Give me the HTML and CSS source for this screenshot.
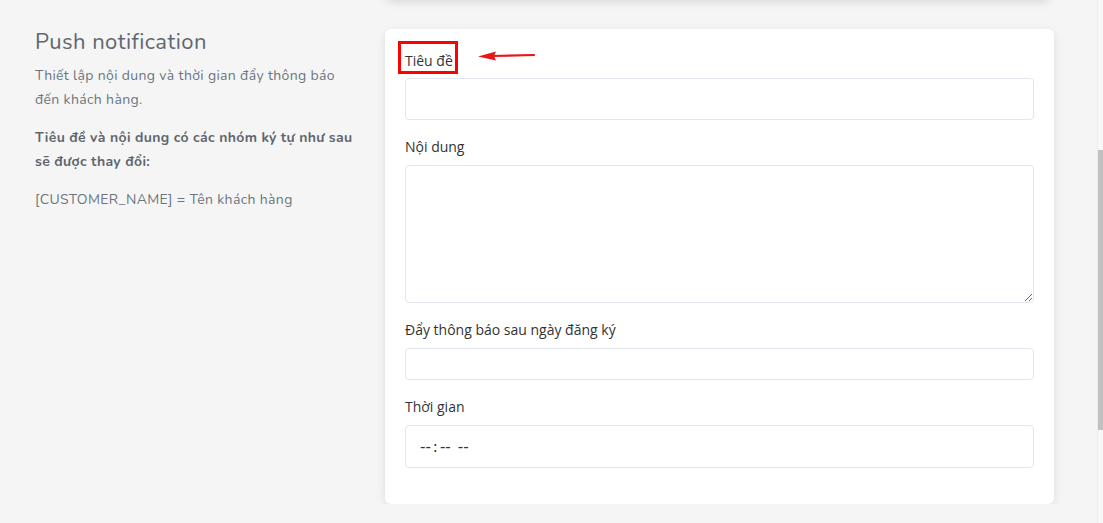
FILE: index.html
```html
<!DOCTYPE html>
<html lang="vi">
<head>
  <meta charset="UTF-8" />
  <meta name="viewport" content="width=device-width, initial-scale=1.0" />
  <title>Push notification</title>
  <link rel="stylesheet" href="styles.css">
</head>
<body>
  <div class="prev-card"></div>

  <div class="section">
    <div class="section-info">
      <h2>Push notification</h2>
      <p>Thiết lập nội dung và thời gian đẩy thông báo đến khách hàng.</p>
      <p class="strong">Tiêu đề và nội dung có các nhóm ký tự như sau sẽ được thay đổi:</p>
      <p>[CUSTOMER_NAME] = Tên khách hàng</p>
    </div>

    <div class="card">
      <div class="form-group">
        <div class="label-wrap">
          <label for="title">Tiêu đề</label>
          <span class="mark-box"></span>
          <svg class="mark-arrow" width="60" height="14" viewBox="0 0 60 14">
            <line x1="14" y1="7" x2="56" y2="6" stroke="#e8161b" stroke-width="2.2" stroke-linecap="round" />
            <path d="M0 7.5 L18 2.5 L16 7 L18 11.5 Z" fill="#e8161b" />
          </svg>
        </div>
        <input type="text" id="title" class="input input-lg" />
      </div>

      <div class="form-group">
        <label for="content">Nội dung</label>
        <textarea id="content" class="input textarea"></textarea>
      </div>

      <div class="form-group">
        <label for="days">Đẩy thông báo sau ngày đăng ký</label>
        <input type="text" id="days" class="input input-sm" />
      </div>

      <div class="form-group">
        <label for="time">Thời gian</label>
        <input type="time" id="time" class="input input-lg time" />
      </div>
    </div>
  </div>

  <div class="scrollbar"><div class="scrollbar-thumb"></div></div>
</body>
</html>
```

FILE: styles.css
```css
body {
  margin: 0;
  background-color: #f5f5f5;
  font-family: 'Nunito', 'Lato', sans-serif;
  color: #6c757d;
  overflow: hidden;
}

.prev-card {
  margin: -12px 0 0 385px;
  width: 665px;
  height: 12px;
  background-color: #fff;
  border-radius: 6px;
  box-shadow: 0 2px 10px rgba(0, 0, 0, 0.12);
}

.section {
  display: flex;
  margin-top: 29px;
}

.section-info {
  width: 320px;
  padding: 0 30px 0 35px;
  font-size: 14px;
  line-height: 24px;
  letter-spacing: 0.35px;
}

.section-info h2 {
  margin: 0 0 9px 0;
  font-size: 22px;
  font-weight: normal;
  line-height: 26px;
  letter-spacing: 0.45px;
  color: #5f676f;
}

.section-info p {
  margin: 0 0 14px 0;
}

.section-info .strong {
  font-weight: bold;
  color: #5f666d;
}

.card {
  width: 629px;
  padding: 20px 20px 20px 20px;
  background-color: #fff;
  border-radius: 6px;
  box-shadow: 0 3px 10px rgba(0, 0, 0, 0.1);
}

.form-group {
  margin-bottom: 16px;
}

.form-group label {
  display: block;
  margin-bottom: 8px;
  font-family: 'Open Sans', 'Roboto', sans-serif;
  font-size: 14px;
  line-height: 21px;
  color: #333;
}

.label-wrap {
  position: relative;
  top: 1px;
}

.mark-box {
  position: absolute;
  left: -7px;
  top: -9px;
  width: 54px;
  height: 27px;
  border: 3px solid #f00;
}

.mark-arrow {
  position: absolute;
  left: 73px;
  top: -1px;
}

.input {
  display: block;
  box-sizing: border-box;
  width: 100%;
  margin: 0;
  padding: 0 14px;
  border: 1px solid #e2e6ee;
  border-radius: 4px;
  background-color: #fff;
  font-family: 'Open Sans', sans-serif;
  font-size: 14px;
  color: #333;
  outline: none;
}

.input-lg {
  height: 42px;
}

.input-sm {
  height: 32px;
}

.textarea {
  height: 138px;
  padding: 8px 14px;
}

.time {
  height: 43px;
  padding-left: 13px;
  font-family: 'DejaVu Sans', sans-serif;
  font-size: 15px;
}

.time::-webkit-datetime-edit-text {
  padding: 0 1px;
}

.time::-webkit-calendar-picker-indicator {
  display: none;
}

.scrollbar {
  position: fixed;
  top: 0;
  right: 0;
  width: 5px;
  height: 100%;
  background-color: #f8f8f8;
  border-left: 1px solid #eee;
}

.scrollbar-thumb {
  margin-top: 150px;
  height: 280px;
  background-color: #c1c1c1;
}
```
